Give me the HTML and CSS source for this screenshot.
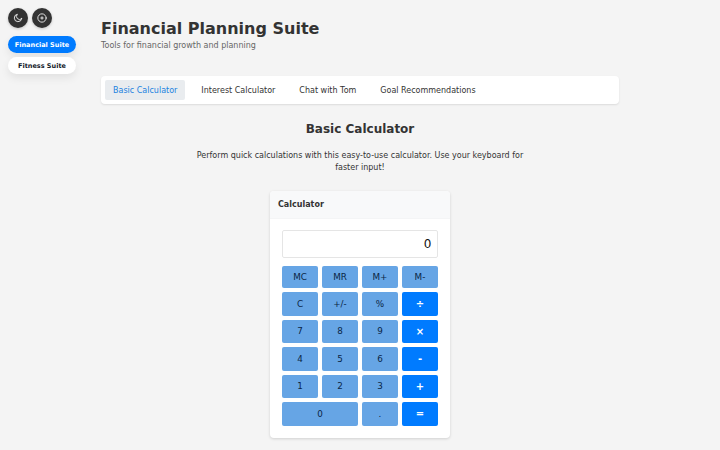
FILE: index.html
```html
<!DOCTYPE html>
<html lang="en">
<head>
	<meta charset="UTF-8">
	<title>Financial Planning Suite</title>
	<link rel="stylesheet" href="styles.css">
</head>
<body>
	<aside class="switcher">
		<div class="round-buttons">
			<button class="round-button" aria-label="Theme">
				<svg viewBox="0 0 24 24" width="10" height="10"><path d="M21 13.5A9 9 0 1 1 10.5 3a7 7 0 0 0 10.500 10.500z"/></svg>
			</button>
			<button class="round-button" aria-label="Focus">
				<svg viewBox="0 0 24 24" width="10" height="10"><circle cx="12" cy="12" r="10"/><path d="M12 9v6M9 12h6"/></svg>
			</button>
		</div>
		<button class="suite-button active">Financial Suite</button>
		<button class="suite-button">Fitness Suite</button>
	</aside>
	<div class="container">
		<header class="header">
			<h1>Financial Planning Suite</h1>
			<p>Tools for financial growth and planning</p>
		</header>
		<nav class="tabs">
			<button class="tab active">Basic Calculator</button>
			<button class="tab">Interest Calculator</button>
			<button class="tab">Chat with Tom</button>
			<button class="tab">Goal Recommendations</button>
		</nav>
		<main class="content">
			<h2>Basic Calculator</h2>
			<p class="intro">Perform quick calculations with this easy-to-use calculator. Use your keyboard for faster input!</p>
			<div class="calculator">
				<h3 class="calculator-header">Calculator</h3>
				<div class="calculator-body">
					<div class="display">0</div>
					<div class="keys">
						<button class="key">MC</button>
						<button class="key">MR</button>
						<button class="key">M+</button>
						<button class="key">M-</button>
						<button class="key">C</button>
						<button class="key">+/-</button>
						<button class="key">%</button>
						<button class="key operator">÷</button>
						<button class="key">7</button>
						<button class="key">8</button>
						<button class="key">9</button>
						<button class="key operator">×</button>
						<button class="key">4</button>
						<button class="key">5</button>
						<button class="key">6</button>
						<button class="key operator">-</button>
						<button class="key">1</button>
						<button class="key">2</button>
						<button class="key">3</button>
						<button class="key operator">+</button>
						<button class="key zero">0</button>
						<button class="key">.</button>
						<button class="key operator">=</button>
					</div>
				</div>
			</div>
		</main>
	</div>
</body>
</html>
```

FILE: styles.css
```css
*{
	box-sizing: border-box;
}
body{
	margin: 0;
	display: flex;
	height: 450px;
	overflow: hidden;
	background: #f4f4f4;
	color: #333;
	font-family: "DejaVu Sans", sans-serif;
	font-size: 8px;
}
h1, h2, h3, p{
	margin: 0;
}
button{
	border: 0;
	padding: 0;
	font-family: inherit;
	color: inherit;
}
.switcher{
	flex: none;
	width: 101px;
	padding: 8px;
	display: flex;
	flex-direction: column;
	align-items: flex-start;
}
.round-buttons{
	display: flex;
	gap: 4px;
	margin-bottom: 8px;
}
.round-button{
	display: flex;
	align-items: center;
	justify-content: center;
	width: 20px;
	height: 20px;
	border-radius: 50%;
	background: #333;
	box-shadow: 0 1px 3px rgba(0, 0, 0, 0.2);
}
.round-button svg{
	fill: none;
	stroke: white;
	stroke-width: 2;
	stroke-linecap: round;
	stroke-linejoin: round;
}
.suite-button{
	width: 68px;
	height: 17px;
	margin-bottom: 4px;
	border-radius: 9px;
	background: white;
	color: #111827;
	font-size: 6.5px;
	font-weight: bold;
	box-shadow: 0 4px 9px rgba(0, 0, 0, 0.08);
}
.suite-button.active{
	background: #007bff;
	color: white;
}
.container{
	width: 518px;
	padding-top: 19px;
}
.header{
	height: 57px;
}
.header h1{
	font-size: 16px;
	line-height: 20px;
}
.header p{
	margin-top: 1px;
	line-height: 12px;
	color: #666;
}
.tabs{
	display: flex;
	gap: 8px;
	padding: 4px;
	height: 28px;
	border-radius: 4px;
	background: white;
	box-shadow: 0 1px 2px rgba(0, 0, 0, 0.1);
}
.tab{
	padding: 0 8px;
	border-radius: 2px;
	background: none;
	font-size: 8px;
}
.tab.active{
	background: #e9ecef;
	color: #1b82e0;
}
.content{
	display: flex;
	flex-direction: column;
	align-items: center;
	padding-top: 16px;
}
.content h2{
	font-size: 12px;
	line-height: 18px;
}
.intro{
	width: 340px;
	margin-top: 12px;
	line-height: 12px;
	text-align: center;
}
.calculator{
	width: 180px;
	height: 247px;
	margin-top: 17px;
	border-radius: 4px;
	background: white;
	overflow: hidden;
	box-shadow: 0 1px 3px rgba(0, 0, 0, 0.15);
}
.calculator-header{
	padding: 0 8px;
	font-size: 8px;
	line-height: 27px;
	background: #f8f9fa;
	border-bottom: 1px solid #f4f5f6;
}
.calculator-body{
	padding: 11px 12px;
}
.display{
	height: 28px;
	padding: 0 5.5px;
	border: 1px solid #e5e5e5;
	border-radius: 2px;
	font-size: 12px;
	line-height: 26px;
	text-align: right;
	color: #111;
}
.keys{
	display: grid;
	grid-template-columns: repeat(4, 1fr);
	grid-template-rows: 22px repeat(5, 23.5px);
	gap: 4px;
	margin-top: 8px;
}
.key{
	border-radius: 2px;
	background: #66a5e5;
	color: #0b2545;
	font-size: 8.8px;
}
.key.operator{
	background: #007bff;
	color: white;
	font-weight: bold;
	font-size: 10px;
}
.key.zero{
	grid-column: span 2;
}
```
